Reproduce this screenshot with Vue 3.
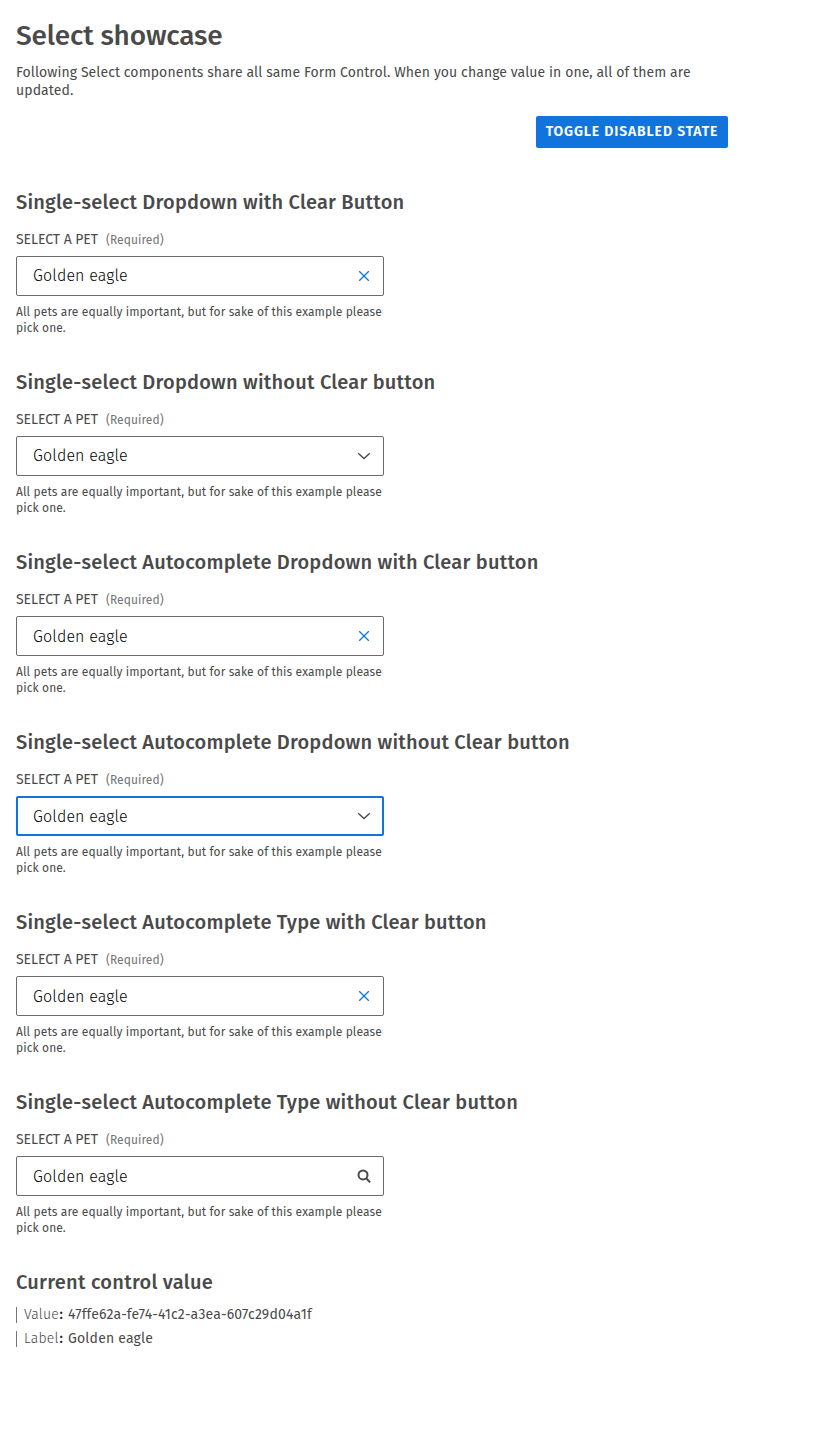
<script setup>
import { ref } from 'vue'

const disabled = ref(false)
const fields = [
  { title: 'Single-select Dropdown with Clear Button', icon: 'clear', plain: true },
  { title: 'Single-select Dropdown without Clear button', icon: 'chevron', plain: true },
  { title: 'Single-select Autocomplete Dropdown with Clear button', icon: 'clear' },
  { title: 'Single-select Autocomplete Dropdown without Clear button', icon: 'chevron', focused: true },
  { title: 'Single-select Autocomplete Type with Clear button', icon: 'clear' },
  { title: 'Single-select Autocomplete Type without Clear button', icon: 'search' },
]
const current = [
  { name: 'Value', text: '47ffe62a-fe74-41c2-a3ea-607c29d04a1f' },
  { name: 'Label', text: 'Golden eagle' },
]
</script>

<template>
  <main class="page">
    <h1><span>Select showcase</span></h1>
    <p class="intro"><span>Following Select components share all same Form Control. When you change value in one, all of them are</span><br><span>updated.</span></p>
    <div class="actions">
      <button class="toggle" type="button" @click="disabled = !disabled"><span>TOGGLE DISABLED STATE</span></button>
    </div>

    <section v-for="field in fields" :key="field.title" class="example">
      <h2><span>{{ field.title }}</span></h2>
      <div class="label"><span class="name">SELECT A PET</span><span class="required">(Required)</span></div>
      <div class="control" :class="{ focused: field.focused, plain: field.plain, disabled }">
        <span class="value">Golden eagle</span>
        <svg v-if="field.icon === 'clear'" class="icon clear" viewBox="0 0 16 16"><path d="M3.2 3.2 12.8 12.8M12.8 3.2 3.2 12.8" /></svg>
        <svg v-else-if="field.icon === 'chevron'" class="icon" viewBox="0 0 16 16"><path d="M2.2 5.2 8 10.6 13.8 5.2" /></svg>
        <svg v-else class="icon search" viewBox="0 0 16 16"><circle cx="7" cy="6.9" r="4.5" /><path d="M10.2 10.3 14.1 14.4" /></svg>
      </div>
      <p class="hint"><span>All pets are equally important, but for sake of this example please</span><br><span>pick one.</span></p>
    </section>

    <section class="current">
      <h2><span>Current control value</span></h2>
      <div v-for="row in current" :key="row.name" class="row">
        <span class="key">{{ row.name }}</span><b class="colon">:</b><span class="data">{{ row.text }}</span>
      </div>
    </section>
  </main>
</template>

<style>
body { background: #fff; }
</style>

<style scoped>
.page {
  box-sizing: border-box;
  width: 744px;
  min-height: 1432px;
  padding: 16px;
  color: #4a4a4a;
  font-family: "Fira Sans", "Noto Sans", sans-serif;
  white-space: nowrap;
}
h1, h2, p { margin: 0; }
h1 { font-size: 28px; line-height: 40px; font-weight: 500; letter-spacing: -0.15px; }
.intro { margin-top: 8px; font-size: 14px; line-height: 18px; letter-spacing: 0.085px; }
.actions { display: flex; justify-content: flex-end; margin-top: 16px; }
.toggle {
  width: 192px;
  height: 32px;
  padding: 0;
  border: 0;
  border-radius: 2px;
  background: #1174dd;
  color: #fff;
  font: 600 14px/30px "Fira Sans", "Noto Sans", sans-serif;
  letter-spacing: 0.88px;
}
.example { height: 180px; }
.actions + .example { margin-top: 40px; }
h2 { font-size: 20px; line-height: 28px; font-weight: 500; letter-spacing: 0.21px; }
.label { display: flex; gap: 8px; margin-top: 12px; height: 24px; line-height: 24px; }
.name { font-size: 14px; letter-spacing: -0.06px; }
.required { color: #747474; font-size: 12px; letter-spacing: 0.08px; }
.control {
  box-sizing: border-box;
  display: flex;
  align-items: center;
  justify-content: space-between;
  width: 368px;
  height: 40px;
  margin-top: 4px;
  padding: 0 11px 0 16px;
  border: 1px solid #6a6a6a;
  border-radius: 2px;
}
.focused { padding: 0 10px 0 15px; border: 2px solid #1174dd; }
.disabled { opacity: 0.5; }
.value { color: #000; font-size: 16px; font-weight: 300; letter-spacing: 0.14px; }
.plain .value { padding-bottom: 2px; }
.icon { width: 16px; height: 16px; fill: none; stroke: #4a4a4a; stroke-width: 1.3; }
.clear { stroke: #1174dd; }
.search { stroke-width: 2; }
.hint { margin-top: 8px; font-size: 12px; line-height: 16px; letter-spacing: 0.105px; }
.row { display: flex; width: 400px; height: 16px; margin-bottom: 8px; padding-left: 7px; border-left: 1px solid #747474; font-size: 14px; line-height: 16px; }
.current h2 { margin-bottom: 11px; letter-spacing: 0.26px; }
.key { width: 35.5px; color: #4a4a4a; font-weight: 300; letter-spacing: 0.2px; }
.colon { width: 8.5px; color: #222; font-weight: 500; }
.data { letter-spacing: 0.18px; }
</style>
